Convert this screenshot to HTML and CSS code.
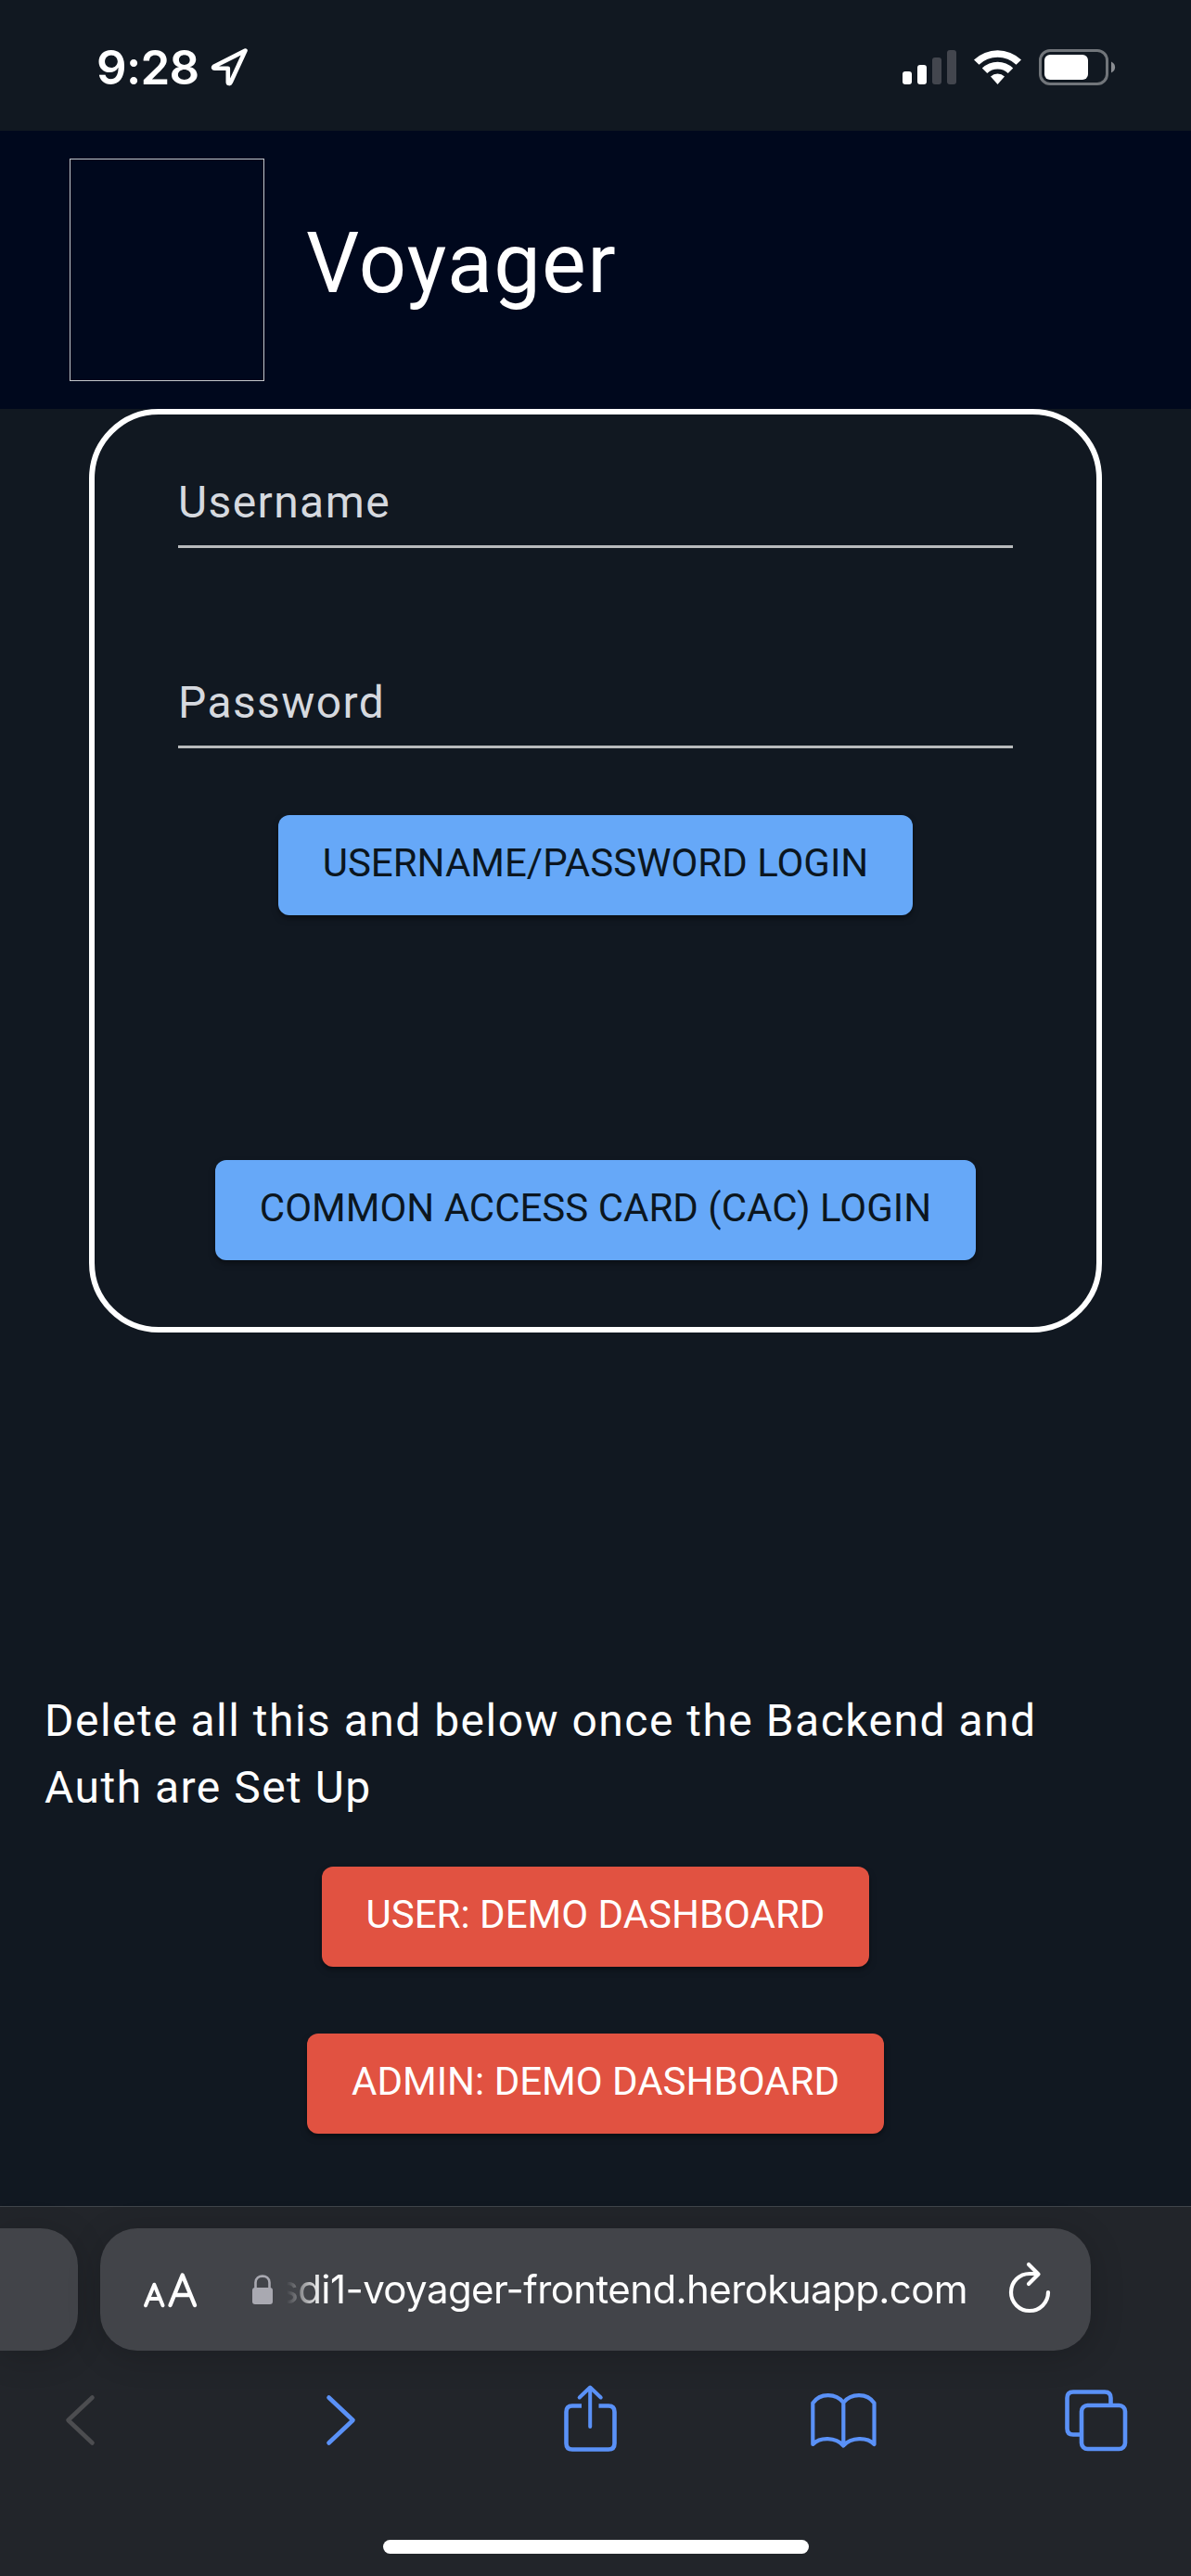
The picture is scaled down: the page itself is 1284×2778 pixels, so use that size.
FILE: index.html
```html
<!DOCTYPE html>
<html lang="en">
<head>
<meta charset="utf-8">
<title>Voyager</title>
<link rel="stylesheet" href="styles.css">
</head>
<body>
<div class="phone">
  <div class="status">
    <span class="time">9:28</span>
    <svg class="arrow" width="42" height="42" viewBox="0 0 42 42"><path d="M37.5 3.5 4 20.5 C2.5 21.5 3 22.8 4.500 22.800H18.800V37.500C18.800 39.500 21 39.500 21.600 38Z" fill="none" stroke="#fff" stroke-width="4.600" stroke-linejoin="round"/></svg>
    <svg class="indicators" width="232" height="42" viewBox="972 51 232 42">
      <g fill="#fff"><rect x="973" y="77" width="10" height="14" rx="3"/><rect x="989" y="70" width="10" height="21" rx="3"/></g>
      <g fill="#43464e"><rect x="1005" y="62" width="10" height="29" rx="3"/><rect x="1021" y="54" width="10" height="37" rx="3"/></g>
      <g fill="#fff">
        <path d="M1050 64.500A37 37 0 0 1 1101 64.500L1095.500 69.800A29 29 0 0 0 1055.500 69.800Z"/>
        <path d="M1058.800 73.500A24 24 0 0 1 1092.200 73.500L1086.700 79A16.500 16.500 0 0 0 1064.300 79Z"/>
        <path d="M1068 82.500A11 11 0 0 1 1083 82.500L1075.500 91Z"/>
      </g>
      <rect x="1121.500" y="54.500" width="72" height="36" rx="10.500" fill="none" stroke="#71757a" stroke-width="3"/>
      <rect x="1126" y="59" width="47" height="27" rx="6" fill="#fff"/>
      <path d="M1198 66.500C1203.500 69 1203.500 76 1198 78.500Z" fill="#8a8d92"/>
    </svg>
  </div>

  <header class="app-bar">
    <div class="logo"></div>
    <h1 class="title">Voyager</h1>
  </header>

  <main class="page">
    <form class="card">
      <label class="field">Username</label>
      <label class="field">Password</label>
      <button type="button" class="btn blue">USERNAME/PASSWORD LOGIN</button>
      <button type="button" class="btn blue cac">COMMON ACCESS CARD (CAC) LOGIN</button>
    </form>
    <p class="note">Delete all this and below once the Backend and<br>Auth are Set Up</p>
    <div class="demo">
      <button type="button" class="btn red">USER: DEMO DASHBOARD</button>
      <button type="button" class="btn red">ADMIN: DEMO DASHBOARD</button>
    </div>
  </main>

  <footer class="browser">
    <div class="tabs">
      <div class="previous"></div>
      <div class="address">
        <svg class="reader" width="60" height="42" viewBox="153 2449 60 42" fill="none" stroke="#fff" stroke-linecap="round" stroke-linejoin="round"><path d="M157 2486.300 166.300 2463.700 175.500 2486.300M160 2479H172.700" stroke-width="4"/><path d="M183.500 2486 196.700 2453.500 210 2486M188 2475H205.500" stroke-width="4.400"/></svg>
        <svg class="lock" width="24" height="34" viewBox="271 2452 24 34"><rect x="272" y="2467" width="22" height="18" rx="3" fill="#a9a9b1"/><path d="M275.500 2468V2461.500C275.500 2452.300 290.500 2452.300 290.500 2461.500V2468" fill="none" stroke="#a9a9b1" stroke-width="2.600"/></svg>
        <div class="url">sdi1-voyager-frontend.herokuapp.com</div>
        <svg class="reload" width="50" height="58" viewBox="1085 2438 50 58" fill="none" stroke="#fff" stroke-width="4.200" stroke-linecap="round" stroke-linejoin="round"><path d="M1130 2472A20 20 0 1 1 1110 2452H1119M1109 2442 1119.500 2452.500 1109 2463"/></svg>
      </div>
    </div>
    <svg class="tools" width="1284" height="100" viewBox="0 2560 1284 100" fill="none" stroke="#5a91f7" stroke-width="4.600" stroke-linecap="round" stroke-linejoin="round">
      <path d="M99.500 2585.500 73.500 2610 99.500 2634.500" stroke="#4c4d50"/>
      <path d="M354.500 2585.500 380.500 2610 354.500 2634.500"/>
      <path d="M627 2594.500H617Q610.500 2594.500 610.500 2601V2635Q610.500 2641.500 617 2641.500H656Q662.500 2641.500 662.500 2635V2601Q662.500 2594.500 656 2594.500H645.500" stroke-linecap="butt"/>
      <path d="M636.200 2617V2575M624.700 2585.500 636.200 2574.500 647.700 2585.500" stroke-width="4"/>
      <path d="M909.300 2591C901 2580.500 884 2580.500 876.300 2591.500V2636C884 2628 901 2628 909.300 2637.500C917.500 2628 935 2628 942.500 2636V2591.500C935 2580.500 917.500 2580.500 909.300 2591V2637.500" stroke-width="4.200"/>
      <path d="M1164 2625.500H1157Q1150.500 2625.500 1150.500 2619V2586Q1150.500 2579.500 1157 2579.500H1191Q1197.500 2579.500 1197.500 2586V2593" stroke-linecap="butt"/>
      <rect x="1166" y="2594" width="47" height="47" rx="6.500"/>
    </svg>
    <div class="home"></div>
  </footer>
</div>
</body>
</html>
```
FILE: styles.css
```css
* { box-sizing: border-box; }
body { margin: 0; background: #111821; }
.phone {
  width: 1284px;
  height: 2778px;
  display: flex;
  flex-direction: column;
  overflow: hidden;
  font-family: Roboto, sans-serif;
  color: #fff;
  background: #111821;
}
.status { height: 141px; display: flex; align-items: flex-start; padding: 51px 80px 0 104px; }
.time { width: 123px; font: 600 51px/44px Inter, sans-serif; letter-spacing: -0.7px; }
.arrow { display: block; }
.indicators { margin-left: auto; }

.app-bar { height: 300px; flex: none; display: flex; align-items: center; padding: 0 75px; gap: 45px; background: #00081d; }
.logo { width: 210px; height: 240px; border: 1px solid #c4c6ca; }
.title { margin: 0; padding-bottom: 12px; font-size: 90px; font-weight: 400; line-height: 120px; letter-spacing: 1.35px; }

.page { flex: 1; display: flex; flex-direction: column; align-items: center; }
.card {
  width: 1092px;
  height: 996px;
  border: 6px solid #fff;
  border-radius: 75px;
  padding: 0 90px;
  display: flex;
  flex-direction: column;
  align-items: center;
}
.field {
  width: 900px;
  height: 96px;
  margin-top: 48px;
  padding-top: 12px;
  border-bottom: 3px solid #b8babc;
  font-size: 48px;
  line-height: 69px;
  letter-spacing: 1.4px;
  color: #d6d9df;
}
.field + .field { margin-top: 120px; }
.btn {
  height: 108px;
  padding: 0 48px 4px;
  border: 0;
  border-radius: 12px;
  font: 400 42px/72px Roboto, sans-serif;
  white-space: nowrap;
  box-shadow: 0 3px 3px rgba(0,0,0,.2), 0 4px 8px rgba(0,0,0,.2);
}
.blue { margin-top: 72px; background: #66a8f8; color: #0b1620; }
.cac { margin-top: 264px; }
.red { background: #e15241; color: #fff; }
.note { width: 1188px; height: 144px; margin: 383px 0 0; font-size: 48px; line-height: 72px; letter-spacing: 1.48px; }
.demo { display: flex; flex-direction: column; align-items: center; gap: 72px; margin-top: 49px; }

.browser { height: 399px; flex: none; border-top: 1px solid #3f444a; background: #22252a; display: flex; flex-direction: column; align-items: center; }
.tabs { width: 100%; display: flex; gap: 24px; margin-top: 23px; }
.previous, .address { height: 132px; background: #424449; box-shadow: 0 6px 36px rgba(0,0,0,.18); }
.previous { width: 84px; border-radius: 0 40px 40px 0; }
.address { width: 1068px; border-radius: 40px; display: flex; align-items: center; padding-left: 45px; }
.reader { margin-top: 2px; }
.lock { margin-left: 58px; }
.url {
  width: 748px;
  display: flex;
  justify-content: flex-end;
  font: 400 42px/60px Inter, sans-serif;
  letter-spacing: -0.59px;
  white-space: nowrap;
  -webkit-mask-image: linear-gradient(90deg, transparent 14px, #000 52px);
  mask-image: linear-gradient(90deg, transparent 14px, #000 52px);
}
.reload { margin-left: 42px; margin-top: -4px; }
.tools { display: block; margin-top: 25px; }
.home { width: 459px; height: 15px; border-radius: 8px; background: #fff; margin-top: 79px; }
```
